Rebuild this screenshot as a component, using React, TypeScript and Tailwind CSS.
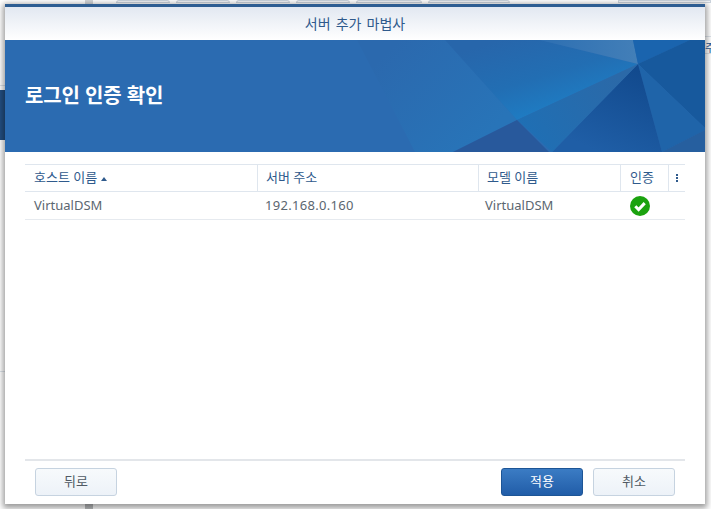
import React from "react"

const font = { fontFamily: '"Noto Sans", "Noto Sans CJK KR", sans-serif' }

const Banner = () => (
  <svg viewBox="5 40 700 112" className="absolute inset-0 h-full w-full" preserveAspectRatio="none">
    <defs>
      <linearGradient id="glow" gradientUnits="userSpaceOnUse" x1="500" y1="40" x2="525" y2="122">
        <stop offset="0" stopColor="#2766ab" />
        <stop offset="0.55" stopColor="#226eb3" />
        <stop offset="1" stopColor="#1e7dc4" />
      </linearGradient>
      <linearGradient id="side" gradientUnits="userSpaceOnUse" x1="380" y1="60" x2="470" y2="150">
        <stop offset="0" stopColor="#2b69ae" />
        <stop offset="1" stopColor="#2874b8" />
      </linearGradient>
      <linearGradient id="dark" gradientUnits="userSpaceOnUse" x1="635" y1="70" x2="600" y2="152">
        <stop offset="0" stopColor="#124a8e" />
        <stop offset="1" stopColor="#1f5ea6" />
      </linearGradient>
      <linearGradient id="top" x1="0" y1="0" x2="1" y2="0">
        <stop offset="0" stopColor="#2d6fb2" />
        <stop offset="1" stopColor="#437fb8" />
      </linearGradient>
      <linearGradient id="mid" gradientUnits="userSpaceOnUse" x1="620" y1="80" x2="530" y2="140">
        <stop offset="0" stopColor="#2b69a8" />
        <stop offset="1" stopColor="#1f6fb4" />
      </linearGradient>
    </defs>
    <polygon points="357,40 445,40 517,120 453,152 415,152" fill="url(#side)" />
    <polygon points="445,40 540,40 638,64 517,120" fill="url(#glow)" />
    <polygon points="540,40 633,40 638,64" fill="url(#top)" />
    <polygon points="633,40 690,40 638,64" fill="#1a64ae" />
    <polygon points="690,40 705,40 705,128 638,64" fill="#17599d" />
    <polygon points="638,64 705,128 705,130 662,152" fill="#1f64a9" />
    <polygon points="705,130 705,152 662,152" fill="#265f9f" />
    <polygon points="638,64 662,152 552,152" fill="url(#dark)" />
    <polygon points="638,64 552,152 517,120" fill="url(#mid)" />
    <polygon points="517,120 549,152 453,152" fill="#28599c" />
  </svg>
)

const Button = ({ label, primary }: { label: string; primary?: boolean }) => (
  <button
    className={
      primary
        ? "h-7 w-[82px] rounded-[3px] border border-[#1d5596] bg-gradient-to-b from-[#3b7cc4] to-[#215da8] text-[13px] text-white"
        : "h-7 w-[82px] rounded-[3px] border border-[#c6d3e0] bg-gradient-to-b from-[#f7fafc] to-[#edf2f8] text-[13px] text-[#505a64]"
    }
  >
    {label}
  </button>
)

export default function App() {
  return (
    <div className="relative h-[509px] w-[711px] overflow-hidden bg-white" style={font}>
      {/* page behind the dialog */}
      <div className="absolute left-0 top-[90px] h-[50px] w-[5px] bg-[#234f82]" />
      <div className="absolute left-0 top-[85px] h-px w-[5px] bg-[#dde3ea]" />
      <div className="absolute left-0 top-[371px] h-px w-[5px] bg-[#dde3ea]" />
      <div className="absolute left-[85px] top-0 h-[4px] w-2 bg-[#d4d6d8]" />
      <div className="absolute left-[85px] bottom-0 h-[5px] w-2 bg-[#b9bbbd]" />
      <div className="absolute left-[116px] top-0 h-[3px] w-[54px] rounded-t border border-[#cdd5de] bg-[#f2f5f8]" />
      <div className="absolute left-[176px] top-0 h-[3px] w-[54px] rounded-t border border-[#cdd5de] bg-[#f2f5f8]" />
      <div className="absolute left-[236px] top-0 h-[3px] w-[54px] rounded-t border border-[#cdd5de] bg-[#f2f5f8]" />
      <div className="absolute left-[296px] top-0 h-[3px] w-[54px] rounded-t border border-[#cdd5de] bg-[#f2f5f8]" />
      <div className="absolute left-[356px] top-0 h-[3px] w-[66px] rounded-t border border-[#cdd5de] bg-[#f2f5f8]" />
      <div className="absolute left-[428px] top-0 h-[3px] w-[82px] rounded-t border border-[#cdd5de] bg-[#f2f5f8]" />
      <div className="absolute left-[618px] top-0 h-[3px] w-[93px] border border-[#cdd5de] bg-[#f2f5f8]" />
      <div className="absolute left-[705px] top-[36px] h-px w-[6px] bg-[#dde3ea]" />
      <div className="absolute left-[705px] top-[53px] h-px w-[6px] bg-[#dde3ea]" />
      <div className="absolute left-[705px] top-[43px] text-[11px] leading-[10px] text-[#2a5a94]">주</div>

      {/* dialog */}
      <div className="absolute left-[5px] top-1 flex h-[500px] w-[700px] flex-col border-t-[3px] border-[#2d5d92] bg-white shadow-[0_2px_6px_2px_rgba(0,0,0,0.4)]">
        <div className="flex h-[33px] items-center justify-center bg-gradient-to-b from-[#e2e8f1] to-white text-[14px] text-[#2f5a8c] [word-spacing:1.5px]">
          서버 추가 마법사
        </div>
        <div className="relative flex h-28 items-center bg-[#2b6bb1] pl-5">
          <Banner />
          <h1 className="relative text-[20px] font-bold tracking-[-0.1px] text-white">로그인 인증 확인</h1>
        </div>

        <div className="mx-5 mt-3 flex-1">
          <div className="flex h-[28px] border-y border-[#dfe6ee] text-[13px] text-[#2f5a8c]">
            <div className="flex w-[233px] items-center gap-1 border-r border-[#dfe6ee] pl-[9px]">
              호스트 이름
              <span className="mt-px h-0 w-0 border-x-[3.5px] border-b-[4px] border-x-transparent border-b-[#2f5a8c]" />
            </div>
            <div className="flex w-[221px] items-center border-r border-[#dfe6ee] pl-[8px]">서버 주소</div>
            <div className="flex w-[142px] items-center border-r border-[#dfe6ee] pl-[8px]">모델 이름</div>
            <div className="flex w-[48px] items-center border-r border-[#dfe6ee] pl-[9px]">인증</div>
            <div className="flex flex-1 flex-col items-center justify-center gap-px">
              <span className="h-[2px] w-[2px] bg-[#2f5a8c]" />
              <span className="h-[2px] w-[2px] bg-[#2f5a8c]" />
              <span className="h-[2px] w-[2px] bg-[#2f5a8c]" />
            </div>
          </div>
          <div className="flex h-[28px] items-center border-b border-[#e6eaef] text-[13px] text-[#5b6670]">
            <div className="w-[233px] pl-[9px]">VirtualDSM</div>
            <div className="w-[221px] pl-[7px] tracking-[0.3px]">192.168.0.160</div>
            <div className="w-[142px] pl-[6px]">VirtualDSM</div>
            <div className="flex w-[48px] pl-[9px]">
              <svg width="20" height="20" viewBox="0 0 20 20">
                <circle cx="10" cy="10" r="10" fill="#1ba20f" />
                <path d="M5.3 10.2 8.6 13.5 14.7 7.1" fill="none" stroke="#fff" strokeWidth="3" />
              </svg>
            </div>
          </div>
        </div>

        <div className="mx-5 flex h-[45px] items-start justify-between border-t-2 border-[#e3e6ea] px-2.5 pt-[7px]">
          <Button label="뒤로" />
          <div className="flex gap-2.5">
            <Button label="적용" primary />
            <Button label="취소" />
          </div>
        </div>
      </div>
    </div>
  )
}
